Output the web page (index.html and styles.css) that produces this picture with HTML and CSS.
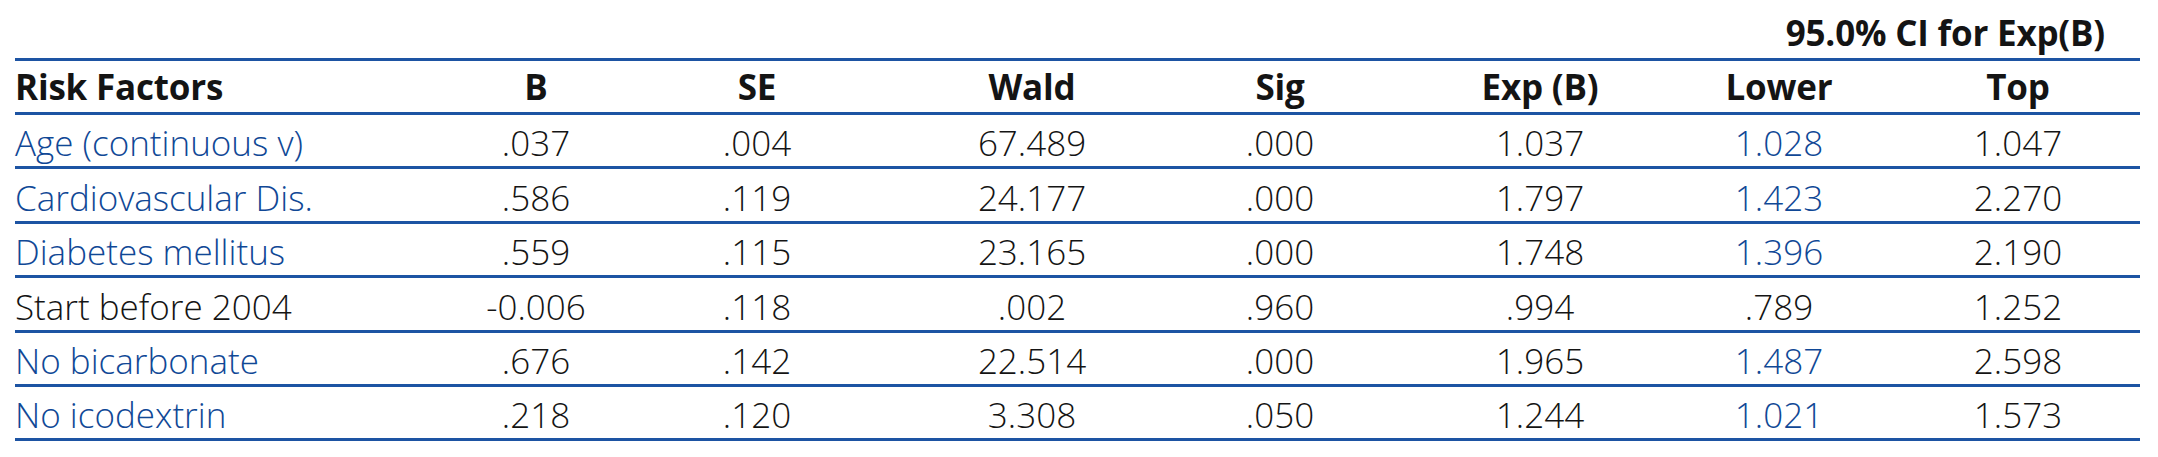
FILE: index.html
```html
<!DOCTYPE html>
<html lang="en">
<head>
<meta charset="utf-8">
<title>Risk factors</title>
<link rel="stylesheet" href="styles.css">
</head>
<body>
<div class="page">
<table class="stats">
  <colgroup>
    <col class="c-name"><col class="c-b"><col class="c-se"><col class="c-wald"><col class="c-sig"><col class="c-exp"><col class="c-low"><col class="c-top">
  </colgroup>
  <thead>
    <tr class="title-row">
      <th colspan="6" class="blank"></th>
      <th colspan="2" class="ci">95.0% CI for Exp(B)</th>
    </tr>
    <tr class="head-row">
      <th class="name">Risk Factors</th>
      <th>B</th>
      <th>SE</th>
      <th>Wald</th>
      <th>Sig</th>
      <th>Exp (B)</th>
      <th>Lower</th>
      <th>Top</th>
    </tr>
  </thead>
  <tbody>
    <tr class="hl">
      <td class="name">Age (continuous v)</td><td>.037</td><td>.004</td><td>67.489</td><td>.000</td><td>1.037</td><td class="low">1.028</td><td>1.047</td>
    </tr>
    <tr class="hl">
      <td class="name">Cardiovascular Dis.</td><td>.586</td><td>.119</td><td>24.177</td><td>.000</td><td>1.797</td><td class="low">1.423</td><td>2.270</td>
    </tr>
    <tr class="hl">
      <td class="name">Diabetes mellitus</td><td>.559</td><td>.115</td><td>23.165</td><td>.000</td><td>1.748</td><td class="low">1.396</td><td>2.190</td>
    </tr>
    <tr>
      <td class="name">Start before 2004</td><td>-0.006</td><td>.118</td><td>.002</td><td>.960</td><td>.994</td><td class="low">.789</td><td>1.252</td>
    </tr>
    <tr class="hl">
      <td class="name">No bicarbonate</td><td>.676</td><td>.142</td><td>22.514</td><td>.000</td><td>1.965</td><td class="low">1.487</td><td>2.598</td>
    </tr>
    <tr class="hl">
      <td class="name">No icodextrin</td><td>.218</td><td>.120</td><td>3.308</td><td>.050</td><td>1.244</td><td class="low">1.021</td><td>1.573</td>
    </tr>
  </tbody>
</table>
</div>
</body>
</html>
```
FILE: styles.css
```css
html, body {
  margin: 0;
  padding: 0;
  background: #ffffff;
}

.page {
  padding: 0 0 0 15px;
}

.stats {
  width: 2125px;
  table-layout: fixed;
  border-collapse: separate;
  border-spacing: 0;
  font-family: "Open Sans", "Noto Sans", sans-serif;
  color: #141414;
}

.c-name { width: 465px; }
.c-b { width: 112px; }
.c-se { width: 330px; }
.c-wald { width: 220px; }
.c-sig { width: 276px; }
.c-exp { width: 244px; }
.c-low { width: 234px; }
.c-top { width: 244px; }

.stats th,
.stats td {
  padding: 0;
  text-align: center;
  vertical-align: bottom;
  white-space: nowrap;
  border-bottom: 3px solid #1d54a3;
}

.stats th {
  font-weight: 700;
  font-size: 35px;
  color: #141414;
  padding-bottom: 2px;
  letter-spacing: -0.2px;
}

.title-row th {
  height: 56px;
}

.title-row .ci {
  text-align: right;
  padding-right: 35px;
}

.head-row th {
  height: 49px;
}

.stats td {
  font-size: 35px;
  font-weight: 320;
  height: 51.4px;
}

.stats .name {
  text-align: left;
}

.hl .name,
.hl .low {
  color: #104896;
}
```
